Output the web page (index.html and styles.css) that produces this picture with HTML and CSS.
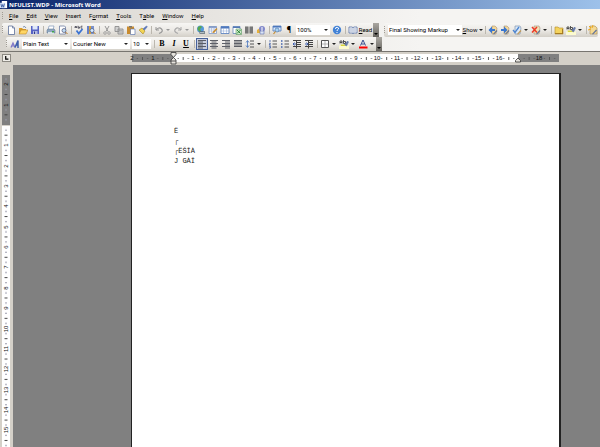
FILE: index.html
```
<!DOCTYPE html>
<html lang="en">
<head>
<meta charset="utf-8">
<title>NFULIST.WDP - Microsoft Word</title>
<link rel="stylesheet" href="styles.css">
</head>
<body>
<svg class="defs" aria-hidden="true">
  <defs>
    <symbol id="new" viewBox="0 0 10 10"><path d="M2.5 1h4l2 2v6.500h-6z" fill="#fff" stroke="#5c6f98" stroke-width=".8"/><path d="M6.500 1v2h2" fill="none" stroke="#5c6f98" stroke-width=".7"/></symbol>
    <symbol id="open" viewBox="0 0 10 10"><path d="M1 3h3l1 1h3v5H1z" fill="#d79b28"/><path d="M1 9l2-4h7L8 9z" fill="#ffd663" stroke="#b27b1a" stroke-width=".5"/><path d="M5 2q2-1.500 3 1" fill="none" stroke="#48669a" stroke-width=".7"/></symbol>
    <symbol id="save" viewBox="0 0 10 10"><path d="M1 1h8v8H1z" fill="#5662c4"/><path d="M2.500 1h5v3.500h-5z" fill="#dfe8fa"/><path d="M3 6h4.500v3H3z" fill="#b3bbe2"/><path d="M4 6.500h1V9H4z" fill="#303a8a"/></symbol>
    <symbol id="print" viewBox="0 0 10 10"><path d="M3 1h5L7 5H2z" fill="#fff" stroke="#6d88b0" stroke-width=".6"/><path d="M1 5l1-1h6l1 1v3H1z" fill="#8fa6bf" stroke="#59708c" stroke-width=".5"/><path d="M2 7h6v2H2z" fill="#d9e2e8"/><path d="M6 6h2v1.500H6z" fill="#41a347"/></symbol>
    <symbol id="preview" viewBox="0 0 10 10"><path d="M1.500 1h5l1 1v7h-6z" fill="#fff" stroke="#5c6f98" stroke-width=".7"/><circle cx="6" cy="5.500" r="2" fill="#c0def4" stroke="#557" stroke-width=".7"/><path d="M7.500 7L9.500 9" stroke="#b77b26"/></symbol>
    <symbol id="spell" viewBox="0 0 10 10"><path d="M1 3V1.500h1.500V3M1 2.300h1.500M4 .8v2.400h1.500V2H4M8.500 1.200H7v2h1.500" stroke="#334" stroke-width=".7" fill="none"/><path d="M2.500 5.500l2.300 3L8.500 4" fill="none" stroke="#3b73d2" stroke-width="1.800"/></symbol>
    <symbol id="research" viewBox="0 0 10 10"><path d="M1 1h2v8H1z" fill="#6681c9"/><path d="M3 1h2v8H3z" fill="#d9a43c"/><path d="M5 1h3v8H5z" fill="#7b92cc"/><circle cx="6" cy="5.500" r="2" fill="#d8edff" stroke="#45598f" stroke-width=".7"/><path d="M7.500 7l2 2" stroke="#b17922"/></symbol>
    <symbol id="cut" viewBox="0 0 10 10"><path d="M3 1l3 5.500M7 1L4 6.500" stroke="#989898"/><circle cx="3" cy="8" r="1.300" fill="none" stroke="#989898" stroke-width=".8"/><circle cx="7" cy="8" r="1.300" fill="none" stroke="#989898" stroke-width=".8"/></symbol>
    <symbol id="copy" viewBox="0 0 10 10"><path d="M1 1.500h4v5H1zM4 4h5v5H4z" fill="#d0d0d0" stroke="#8e8e8e" stroke-width=".9"/><path d="M5 5.500h3M5 7h3" stroke="#999" stroke-width=".6"/></symbol>
    <symbol id="paste" viewBox="0 0 10 10"><path d="M1 1.500h7V9H1z" fill="#c98b2e"/><path d="M3 1h3v1.500H3z" fill="#777"/><path d="M4.500 4h4.500v5.500H4.500z" fill="#fff" stroke="#4a68a8" stroke-width=".6"/></symbol>
    <symbol id="brush" viewBox="0 0 10 10"><path d="M1 5l3-2 3 3-2 3z" fill="#f2d454" stroke="#a98622" stroke-width=".6"/><path d="M5 4l3.500-3 .8.800L6.500 5z" fill="#5975b5" stroke="#5975b5" stroke-width=".6"/></symbol>
    <symbol id="undo" viewBox="0 0 10 10"><path d="M2 2v3h3" fill="none" stroke="#999"/><path d="M2 5q3-3.500 5.500-1T5 8.500" fill="none" stroke="#999" stroke-width="1.200"/></symbol>
    <symbol id="redo" viewBox="0 0 10 10"><path d="M8 2v3H5" fill="none" stroke="#aaa"/><path d="M8 5Q5 1.500 2.500 4T5 8.500" fill="none" stroke="#aaa" stroke-width="1.200"/></symbol>
    <symbol id="link" viewBox="0 0 10 10"><circle cx="4.500" cy="4" r="3.500" fill="#5598d8"/><path d="M2 2q3-2 4 0L4 4l1 2-2 .5L1.500 4z" fill="#58a84e"/><path d="M3.500 7.500h5.500" stroke="#52616c" stroke-width="2.400"/><path d="M4 7.500h4.500" stroke="#cbd5d9" stroke-width=".8"/></symbol>
    <symbol id="tables" viewBox="0 0 10 10"><path d="M1 1.500h7.500v7H1z" fill="#fff" stroke="#718cbf" stroke-width=".7"/><path d="M1 1.500h7.500v1.300H1z" fill="#718cbf"/><path d="M1 4h7M1 6h7M3.500 2v6M6 2v6" stroke="#91a7d0" stroke-width=".5"/><path d="M4 7.500l4.500-4.500 1 1L6 8z" fill="#c98d2e"/></symbol>
    <symbol id="table" viewBox="0 0 10 10"><path d="M1 1.500h8v7H1z" fill="#fff" stroke="#4f78bd" stroke-width=".8"/><path d="M1 1.500h8v2H1z" fill="#4f78bd"/><path d="M1 6h8M3.500 3v5M6.500 3v5" stroke="#8da9d7" stroke-width=".5"/></symbol>
    <symbol id="excel" viewBox="0 0 10 10"><path d="M1 1.500h7v7H1z" fill="#fff" stroke="#5379b4" stroke-width=".7"/><path d="M1 1.500h7v1.500H1z" fill="#5379b4"/><path d="M4 4h5.500v5.500H4z" fill="#cde8c9" stroke="#41894a" stroke-width=".5"/><path d="M5 5l3.500 3.500m0-3.500L5 8.500" stroke="#2c8738"/></symbol>
    <symbol id="columns" viewBox="0 0 10 10"><path d="M1 1.500h3.500v7H1zM5.500 1.500H9v7H5.500z" fill="#6c6c6c"/><path d="M1 3h3.500M5.500 3H9M1 5h3.500M5.500 5H9M1 7h3.500M5.500 7H9" stroke="#aaa" stroke-width=".4"/></symbol>
    <symbol id="drawing" viewBox="0 0 10 10"><path d="M1 5l3-2v5H1z" fill="#e5b13b"/><circle cx="6" cy="4" r="3" fill="#8289ca"/><path d="M4 6h4v3H4z" fill="#dce5f7" stroke="#5e70ab" stroke-width=".6"/><path d="M6 2v4" stroke="#fff"/></symbol>
    <symbol id="map" viewBox="0 0 10 10"><path d="M1 1h8v5H1z" fill="#dcecff" stroke="#4d78bd" stroke-width=".8"/><path d="M1 1h8v1.500H1z" fill="#4d78bd"/><circle cx="5" cy="5" r="2" fill="#a6d3f5" stroke="#456b9f" stroke-width=".6"/><path d="M3.500 6.500L1.500 9" stroke="#c38a2d" stroke-width="1.200"/></symbol>
    <symbol id="help" viewBox="0 0 10 10"><circle cx="5" cy="5" r="4.200" fill="#4282d6"/><path d="M3.500 4q0-2 1.700-1.700T6.500 4Q5 4.800 5 6M5 7v1" fill="none" stroke="#fff"/></symbol>
    <symbol id="book" viewBox="0 0 10 10"><path d="M1 2h3l1 .7L6 2h3v6H6l-1 .700L4 8H1z" fill="#fff" stroke="#5670a5" stroke-width=".8"/><path d="M5 2.500v6M2 4h2M6 4h2M2 6h2M6 6h2" stroke="#5670a5" stroke-width=".6"/></symbol>
    <symbol id="styles" viewBox="0 0 10 10"><path d="M1 8.500L3 4l2 4.500M2 7h2" fill="none" stroke="#7e75c7" stroke-width="1.200"/><path d="M5 8.500L8 1.500V9M5.500 6H8" fill="none" stroke="#3f5fac" stroke-width="1.500"/></symbol>
    <symbol id="left" viewBox="0 0 10 10"><path d="M1 1.500h8M1 3h5M1 4.500h8M1 6h5M1 7.500h8M1 9h5" stroke="#4d5058" stroke-width=".9"/></symbol>
    <symbol id="center" viewBox="0 0 10 10"><path d="M1 1.500h8M2.500 3h5M1 4.500h8M2.500 6h5M1 7.500h8M2.500 9h5" stroke="#4d5058" stroke-width=".9"/></symbol>
    <symbol id="right" viewBox="0 0 10 10"><path d="M1 1.500h8M4 3h5M1 4.500h8M4 6h5M1 7.500h8M4 9h5" stroke="#4d5058" stroke-width=".9"/></symbol>
    <symbol id="justify" viewBox="0 0 10 10"><path d="M1 1.500h8M1 3h8M1 4.500h8M1 6h8M1 7.500h8" stroke="#4d5058" stroke-width=".9"/></symbol>
    <symbol id="spacing" viewBox="0 0 10 10"><path d="M5 2h4M5 5h4M5 8h4" stroke="#555"/><path d="M2.500 2v6M1 3.500L2.500 1.500 4 3.500M1 6.500l1.500 2 1.500-2" fill="none" stroke="#4674bd" stroke-width=".8"/></symbol>
    <symbol id="numbers" viewBox="0 0 10 10"><path d="M4.500 2H9M4.500 5H9M4.500 8H9" stroke="#555"/><path d="M2 1v2M1 4.300h1.500L1 6h2M1 7.300h1.500V9H1" fill="none" stroke="#4162ac" stroke-width=".8"/></symbol>
    <symbol id="bullets" viewBox="0 0 10 10"><path d="M4.500 2H9M4.500 5H9M4.500 8H9" stroke="#555"/><path d="M1 1.300h1.500v1.500H1zM1 4.300h1.500v1.500H1zM1 7.300h1.500v1.500H1z" fill="#4162ac"/></symbol>
    <symbol id="outdent" viewBox="0 0 10 10"><path d="M1 1.500h8M5 3.500h4M5 5.500h4M1 7.500h8M4.500 1v8.500" stroke="#444"/><path d="M4 5H1m1.500-1.500L1 5l1.500 1.500" fill="none" stroke="#3e60b0"/></symbol>
    <symbol id="indent" viewBox="0 0 10 10"><path d="M1 1.500h8M5 3.500h4M5 5.500h4M1 7.500h8M4.500 1v8.500" stroke="#444"/><path d="M1 5h3M2.500 3.500L4 5 2.500 6.500" fill="none" stroke="#3e60b0"/></symbol>
    <symbol id="border" viewBox="0 0 10 10"><path d="M1.500 1.500h7v7h-7z" fill="#fff" stroke="#555"/><path d="M5 2v6M2 5h6" stroke="#999" stroke-width=".7"/></symbol>
    <symbol id="marker" viewBox="0 0 10 10"><path d="M0 6.500h10V10H0z" fill="#fdfbd0"/><path d="M1 4.500V2h2v2.500M1 3.500h2M4.500 1v3.500h2V2.500h-2" fill="none" stroke="#444" stroke-width=".9"/><path d="M5.500 6l3-4 1 1-2 4z" fill="#667cac" stroke="#566a98" stroke-width=".5"/><path d="M1.500 5.500h4l1 1.500H2z" fill="#d8d53b"/></symbol>
    <symbol id="color" viewBox="0 0 10 10"><path d="M2.500 6.500L5 1l2.500 5.500M3.500 5h3" fill="none" stroke="#384c8f"/><path d="M1 7.500h8.500v2H1z" fill="#f00"/></symbol>
    <symbol id="prev" viewBox="0 0 10 10"><path d="M4 1h3l2 2-1 6H4z" fill="#f2d79b" stroke="#9b8060" stroke-width=".5"/><path d="M4 1.500L.5 5 4 8.500V6h3V4H4z" fill="#3976cf"/><path d="M5 9l3.500-4 1 1L6 9.500z" fill="#637395"/></symbol>
    <symbol id="next" viewBox="0 0 10 10"><path d="M4 1h3l2 2-1 6H4z" fill="#f2d79b" stroke="#9b8060" stroke-width=".5"/><path d="M4 1.500L7.500 5 4 8.500V6H1V4h3z" fill="#3976cf"/><path d="M5 9l3.500-4 1 1L6 9.500z" fill="#637395"/></symbol>
    <symbol id="accept" viewBox="0 0 10 10"><path d="M3 1h5l1 2-1 6H3z" fill="#dbe8f6" stroke="#7188aa" stroke-width=".6"/><path d="M1 5l2 2.500L7 2" fill="none" stroke="#4b84d1" stroke-width="1.300"/><path d="M5 9l3.500-4 1 1L6 9.500z" fill="#c49a56"/></symbol>
    <symbol id="reject" viewBox="0 0 10 10"><path d="M3 1h5l1 2-1 6H3z" fill="#f1dfb5" stroke="#8d7c68" stroke-width=".5"/><path d="M1 2l5 5.500M6 2L1 7.500" stroke="#ee3d27" stroke-width="1.500"/><path d="M5 9l3.500-4 1 1L6 9.500z" fill="#637395"/></symbol>
    <symbol id="comment" viewBox="0 0 10 10"><path d="M1 2h3l1 1h4v6H1z" fill="#f4d35e" stroke="#b28a25" stroke-width=".6"/><path d="M1 8.500h8M8.500 4v5" stroke="#a67c21"/></symbol>
    <symbol id="pane" viewBox="0 0 10 10"><path d="M2 1h5l2 2v6H2z" fill="#f4d994" stroke="#a98951" stroke-width=".6"/><path d="M1 1l2 2M5 0L4 3M0 5l3-1" stroke="#eea91d"/><path d="M4 9l4-4.500 1 1L5 9.500z" fill="#60739a"/></symbol>
  </defs>
</svg>

<header class="title"><svg class="app" viewBox="0 0 9 9" aria-hidden="true"><path d="M2 0h6v8H2z" fill="#fff"/><path d="M0 2h6v6H0z" fill="#d6e3fa"/><path d="M1 3l1 4 1-3 1 3 1-4" fill="none" stroke="#31549c" stroke-width=".9"/></svg><h1>NFULIST.WDP - Microsoft Word</h1></header>

<nav class="menu" aria-label="Menu bar">
  <i class="grip"></i>
  <button><u>F</u>ile</button><button><u>E</u>dit</button><button><u>V</u>iew</button><button><u>I</u>nsert</button><button>F<u>o</u>rmat</button><button><u>T</u>ools</button><button>T<u>a</u>ble</button><button><u>W</u>indow</button><button><u>H</u>elp</button>
</nav>

<div class="bars">
  <div class="dock">
    <div class="bar" role="toolbar" aria-label="Standard">
      <i class="grip"></i>
      <button aria-label="New"><svg><use href="#new"/></svg></button>
      <button aria-label="Open"><svg><use href="#open"/></svg></button>
      <button aria-label="Save"><svg><use href="#save"/></svg></button>
      <i class="sep"></i>
      <button aria-label="Print"><svg><use href="#print"/></svg></button>
      <button aria-label="Print preview"><svg><use href="#preview"/></svg></button>
      <i class="sep"></i>
      <button aria-label="Spelling"><svg><use href="#spell"/></svg></button>
      <button aria-label="Research"><svg><use href="#research"/></svg></button>
      <i class="sep"></i>
      <button aria-label="Cut"><svg><use href="#cut"/></svg></button>
      <button aria-label="Copy"><svg><use href="#copy"/></svg></button>
      <button aria-label="Paste"><svg><use href="#paste"/></svg></button>
      <button aria-label="Format painter"><svg><use href="#brush"/></svg></button>
      <i class="sep"></i>
      <button class="split dim" aria-label="Undo"><svg><use href="#undo"/></svg></button>
      <button class="split dim" aria-label="Redo"><svg><use href="#redo"/></svg></button>
      <i class="sep"></i>
      <button aria-label="Hyperlink"><svg><use href="#link"/></svg></button>
      <button aria-label="Tables and borders"><svg><use href="#tables"/></svg></button>
      <button aria-label="Insert table"><svg><use href="#table"/></svg></button>
      <button aria-label="Insert worksheet"><svg><use href="#excel"/></svg></button>
      <button aria-label="Columns"><svg><use href="#columns"/></svg></button>
      <button aria-label="Drawing"><svg><use href="#drawing"/></svg></button>
      <i class="sep"></i>
      <button aria-label="Document map"><svg><use href="#map"/></svg></button>
      <button class="pilcrow" aria-label="Show marks">¶</button>
      <span class="pick zoom"><select aria-label="Zoom"><option>100%</option></select></span>
      <button aria-label="Help"><svg><use href="#help"/></svg></button>
      <i class="sep"></i>
      <button class="read"><svg><use href="#book"/></svg><span><u>R</u>ead</span></button>
      <button class="more" aria-label="More buttons"></button>
    </div>
    <div class="bar review" role="toolbar" aria-label="Reviewing">
      <i class="grip"></i>
      <span class="pick markup"><select aria-label="Display for review"><option>Final Showing Markup</option></select></span>
      <button class="show"><span><u>S</u>how</span></button>
      <i class="sep"></i>
      <button aria-label="Previous"><svg><use href="#prev"/></svg></button>
      <button aria-label="Next"><svg><use href="#next"/></svg></button>
      <button class="split" aria-label="Accept change"><svg><use href="#accept"/></svg></button>
      <button class="split" aria-label="Reject change"><svg><use href="#reject"/></svg></button>
      <i class="sep"></i>
      <button aria-label="Insert comment"><svg><use href="#comment"/></svg></button>
      <button class="split" aria-label="Highlight change"><svg><use href="#marker"/></svg></button>
      <i class="sep"></i>
      <button class="last" aria-label="Reviewing pane"><svg><use href="#pane"/></svg></button>
    </div>
  </div>
  <div class="dock">
    <div class="bar format" role="toolbar" aria-label="Formatting">
      <i class="grip"></i>
      <button aria-label="Styles and formatting"><svg><use href="#styles"/></svg></button>
      <span class="pick style"><select aria-label="Style"><option>Plain Text</option></select></span>
      <span class="pick font"><select aria-label="Font"><option>Courier New</option></select></span>
      <span class="pick size"><select aria-label="Font size"><option>10</option></select></span>
      <i class="sep"></i>
      <button class="glyph"><b>B</b></button>
      <button class="glyph"><em>I</em></button>
      <button class="glyph"><u>U</u></button>
      <i class="sep"></i>
      <button class="on" aria-label="Align left"><svg><use href="#left"/></svg></button>
      <button aria-label="Center"><svg><use href="#center"/></svg></button>
      <button aria-label="Align right"><svg><use href="#right"/></svg></button>
      <button aria-label="Justify"><svg><use href="#justify"/></svg></button>
      <button class="split" aria-label="Line spacing"><svg><use href="#spacing"/></svg></button>
      <i class="sep"></i>
      <button aria-label="Numbering"><svg><use href="#numbers"/></svg></button>
      <button aria-label="Bullets"><svg><use href="#bullets"/></svg></button>
      <button aria-label="Decrease indent"><svg><use href="#outdent"/></svg></button>
      <button aria-label="Increase indent"><svg><use href="#indent"/></svg></button>
      <i class="sep"></i>
      <button class="split" aria-label="Border"><svg><use href="#border"/></svg></button>
      <button class="split" aria-label="Highlight"><svg><use href="#marker"/></svg></button>
      <button class="split" aria-label="Font color"><svg><use href="#color"/></svg></button>
      <button class="more" aria-label="More buttons"></button>
    </div>
  </div>
</div>

<div class="work">
  <div class="corner"><button aria-label="Tab stop"><svg viewBox="0 0 9 9"><path d="M3.500 2v4H7" fill="none" stroke="#000" stroke-width="1.600"/></svg></button></div>
  <div class="hruler">
    <svg class="hscale" viewBox="0 0 432 13" aria-label="Horizontal ruler">
      <defs><pattern id="hticks" x="43" width="20.350" height="14" patternUnits="userSpaceOnUse"><path d="M4.600 6h1v1h-1zM14.800 6h1v1h-1z" fill="#555"/><path d="M9.700 5h1v3h-1z" fill="#555"/></pattern></defs>
      <path d="M2 2h41v8H2zM388 2h41v8h-41z" fill="#808080"/><path d="M43 2h345v8H43z" fill="#fff"/><path d="M4 2h423v8H4z" fill="url(#hticks)"/>
      <g class="nums"><text x="2" y="8">2</text><text x="23" y="8">1</text><text x="63" y="8">1</text><text x="84" y="8">2</text><text x="104" y="8">3</text><text x="124" y="8">4</text><text x="145" y="8">5</text><text x="165" y="8">6</text><text x="185" y="8">7</text><text x="206" y="8">8</text><text x="226" y="8">9</text><text x="247" y="8">10</text><text x="267" y="8">11</text><text x="287" y="8">12</text><text x="308" y="8">13</text><text x="328" y="8">14</text><text x="348" y="8">15</text><text x="369" y="8">16</text><text x="409" y="8">18</text></g>
      <path d="M41 .5h5v2L43.500 5.500 41 2.500zM43.500 5.500L46 8v4h-5V8zM41 9h5M388 6l2.500 2.500V10h-5V8.500z" fill="#e5e2dc" stroke="#333" stroke-width=".8"/>
    </svg>
  </div>
  <div class="vruler">
    <svg class="vscale" viewBox="0 0 13 382" aria-label="Vertical ruler">
      <defs><pattern id="vticks" y="60" width="13" height="20.350" patternUnits="userSpaceOnUse"><path d="M5 4.600h2v1H5zM5 14.800h2v1H5z" fill="#99a"/><path d="M4.500 9.700h3v1h-3z" fill="#444"/></pattern></defs>
      <path d="M2 10h8v50H2z" fill="#808080"/><path d="M2 61h8v321H2z" fill="#fff"/><path d="M2 12h8v370H2z" fill="url(#vticks)"/>
      <g class="nums"><text transform="translate(8 19) rotate(-90)">2</text><text transform="translate(8 40) rotate(-90)">1</text><text transform="translate(8 80) rotate(-90)">1</text><text transform="translate(8 101) rotate(-90)">2</text><text transform="translate(8 121) rotate(-90)">3</text><text transform="translate(8 141) rotate(-90)">4</text><text transform="translate(8 162) rotate(-90)">5</text><text transform="translate(8 182) rotate(-90)">6</text><text transform="translate(8 202) rotate(-90)">7</text><text transform="translate(8 223) rotate(-90)">8</text><text transform="translate(8 243) rotate(-90)">9</text><text transform="translate(8 264) rotate(-90)">10</text><text transform="translate(8 284) rotate(-90)">11</text><text transform="translate(8 304) rotate(-90)">12</text><text transform="translate(8 325) rotate(-90)">13</text><text transform="translate(8 345) rotate(-90)">14</text><text transform="translate(8 365) rotate(-90)">15</text></g>
    </svg>
  </div>
  <main class="desk"><article class="page"><p>Ë</p><p>┌</p><p>┌ËŠÎÀ</p><p>J GÀÎ</p></article></main>
</div>
</body>
</html>
```
FILE: styles.css
```
* { box-sizing: border-box; }

body {
  margin: 0;
  min-height: 100vh;
  display: flex;
  flex-direction: column;
  overflow: hidden;
  background: #d4d0c8;
  color: #000;
  font: 6px/8px Roboto, "Liberation Sans", sans-serif;
}

.defs { position: absolute; width: 0; height: 0; }

button {
  display: flex;
  align-items: center;
  justify-content: center;
  flex: none;
  margin: 0;
  padding: 0;
  border: 0;
  background: none;
  color: inherit;
  font: inherit;
}

.title {
  display: flex;
  align-items: center;
  gap: 1px;
  height: 9px;
  background: linear-gradient(90deg, #0a246a, #9dc1ea);
  color: #fff;
}
.title h1 { margin: 0; font: 700 6px/8px "Open Sans", sans-serif; }
.app { width: 8px; height: 8px; }

.menu {
  display: flex;
  align-items: center;
  height: 14px;
  padding-left: 2px;
  background: linear-gradient(90deg, #d8d5cf, #f5f4f2 70%);
}
.menu button { padding: 0 4px; }

.grip {
  flex: none;
  width: 1px;
  height: 8px;
  margin-right: 2px;
  background: repeating-linear-gradient(#a09c94 0 1px, transparent 1px 2px);
}

.bars {
  background: linear-gradient(90deg, #d8d5cf, #f5f4f2 70%);
  border-bottom: 1px solid #777570;
}
.dock { display: flex; gap: 5px; padding-left: 2px; }
.dock + .dock { padding-left: 6px; }
.bar {
  display: flex;
  align-items: center;
  flex: none;
  height: 14px;
  background: linear-gradient(#f7f6f4, #eceae6 50%, #d3cfc7);
  border-radius: 2px;
}
.bar svg { width: 10px; height: 10px; flex: none; }
.bar button { width: 12px; height: 12px; }
.bar .split { width: 19px; justify-content: flex-start; gap: 2px; padding-left: 1px; }
.split::after, .show::after, .pick::after {
  content: "";
  border: 2px solid transparent;
  border-top-color: #222;
  border-bottom: 0;
}
.bar .dim::after { border-top-color: #999; }
.sep { flex: none; width: 1px; height: 8px; margin: 0 1px 0 2px; background: #bbb7ae; }
.bar .on { background: #c8cede; border: 1px solid #47629c; }
.bar .glyph { font-size: 8px; font-family: "Liberation Serif", serif; font-weight: 700; }
.bar .pilcrow { font-size: 9px; }

.pick {
  display: flex;
  align-items: center;
  flex: none;
  height: 10px;
  padding-right: 2px;
  margin: 0 1px;
  background: #fff;
}
.pick select {
  flex: 1;
  min-width: 0;
  height: 10px;
  padding: 0 0 0 1px;
  border: 0;
  appearance: none;
  background: none;
  color: inherit;
  font: inherit;
}
.zoom { width: 34px; }
.style { width: 48px; }
.font { width: 58px; }
.size { width: 19px; }
.markup { width: 74px; }
.bar .read { width: 26px; gap: 1px; }
.bar .show { width: 20px; gap: 2px; }
.bar .last { width: 10px; }
.bar .more {
  width: 6px;
  height: 14px;
  background: linear-gradient(#aaa7a1, #66645f);
}
.more::after {
  content: "";
  margin-top: 8px;
  border: 2px solid transparent;
  border-top-color: #000;
  border-bottom: 0;
}

.work {
  flex: 1;
  display: grid;
  grid-template-columns: 13px 1fr;
  grid-template-rows: 13px 1fr;
}
.corner { padding: 2px 0 0 2px; }
.corner button { width: 9px; height: 8px; border: 1px solid #8c8982; background: #efede8; }
.corner svg { width: 8px; height: 8px; }
.hruler { padding-left: 117px; overflow: hidden; }
.hscale { display: block; width: 432px; height: 13px; }
.vscale { display: block; width: 13px; height: 382px; }
.nums { font: 6px "Liberation Sans", sans-serif; text-anchor: middle; fill: #111; }

.desk { background: #808080; padding: 8px 39px 0 118px; display: flex; }
.page {
  flex: 1;
  padding: 52px 42px 0;
  background: #fff;
  border: 1px solid #222;
  border-right-width: 2px;
  border-bottom: 0;
  color: #222;
  font: 7px/10px "Liberation Mono", monospace;
}
.page p { margin: 0; white-space: pre; }
```
